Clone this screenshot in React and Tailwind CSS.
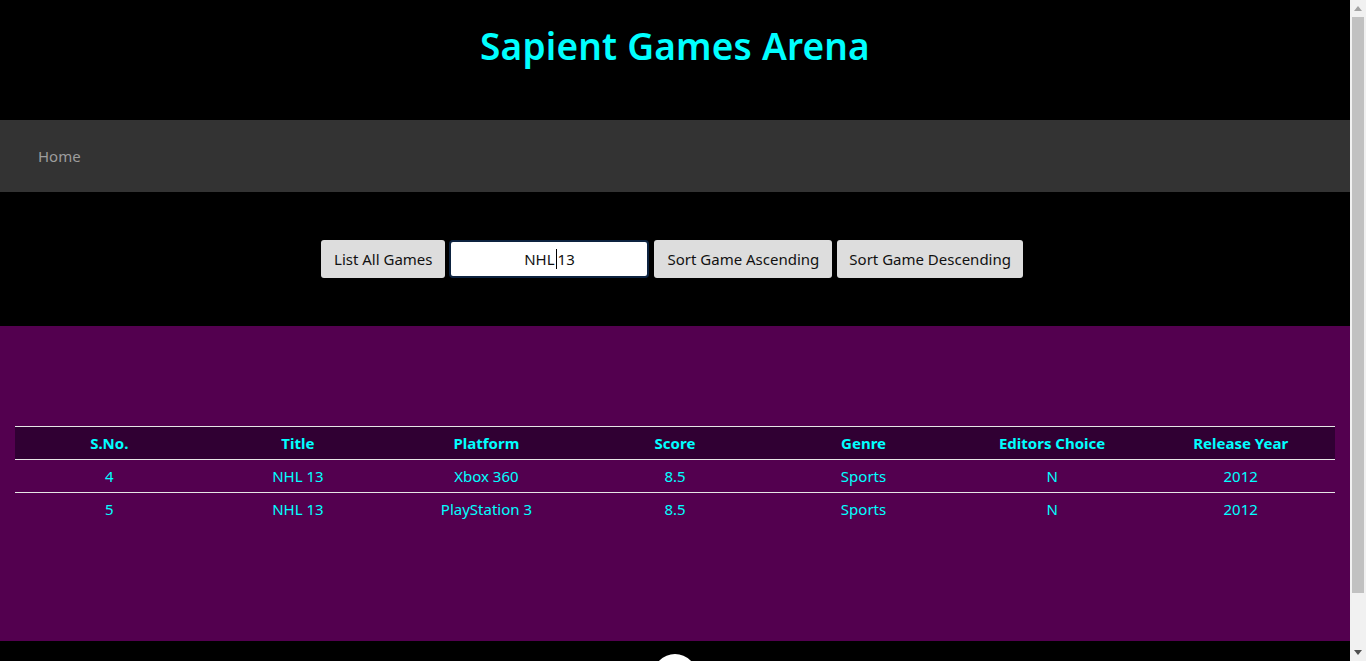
import React from 'react';

const games = [
  { sno: 4, title: 'NHL 13', platform: 'Xbox 360', score: '8.5', genre: 'Sports', editors: 'N', year: 2012 },
  { sno: 5, title: 'NHL 13', platform: 'PlayStation 3', score: '8.5', genre: 'Sports', editors: 'N', year: 2012 },
];

const cols = ['S.No.', 'Title', 'Platform', 'Score', 'Genre', 'Editors Choice', 'Release Year'];

function Scrollbar() {
  return (
    <div className="w-[16px] h-[661px] bg-[#f1f1f1] flex flex-col items-center shrink-0">
      <div className="h-[17px] flex items-center justify-center">
        <svg width="8" height="5" viewBox="0 0 8 5"><path d="M4 0L8 5H0z" fill="#a3a3a3" /></svg>
      </div>
      <div className="w-[12px] h-[576px] bg-[#c1c1c1]"></div>
      <div className="flex-1"></div>
      <div className="h-[17px] flex items-center justify-center">
        <svg width="8" height="5" viewBox="0 0 8 5"><path d="M0 0H8L4 5z" fill="#505050" /></svg>
      </div>
    </div>
  );
}

export default function App() {
  return (
    <div className="h-[661px] overflow-hidden flex bg-black font-['Noto_Sans','Open_Sans',sans-serif]">
      <div className="w-[1350px] shrink-0">
        <header className="h-[120px] flex justify-center pt-[22px]">
          <h1 className="text-[37px] leading-[48px] font-semibold text-[#00ffff] tracking-[0.2px]">Sapient Games Arena</h1>
        </header>

        <nav className="h-[72px] bg-[#333333] flex items-center px-[38px]">
          <a href="#" className="text-[15px] text-[#9d9d9d]">Home</a>
        </nav>

        <div className="h-[134px] flex justify-center items-start pt-[48px] gap-[4px] pr-[6px]">
          <button className="h-[38px] px-[13px] bg-[#dddddd] rounded-[3px] text-[15px] text-[#111]">List All Games</button>
          <div className="h-[38px] w-[200px] bg-white rounded-[4px] border-2 border-[#0d2340] flex items-center justify-center text-[15px] text-[#111]">
            NHL<span className="inline-block w-px h-[20px] bg-black mx-[1px]"></span>13
          </div>
          <button className="h-[38px] px-[13px] bg-[#dddddd] rounded-[3px] text-[15px] text-[#111] ml-[1px]">Sort Game Ascending</button>
          <button className="h-[38px] px-[12px] bg-[#dddddd] rounded-[3px] text-[15px] text-[#111] ml-[1px]">Sort Game Descending</button>
        </div>

        <main className="h-[315px] bg-[#53004f] pt-[100px] px-[15px]">
          <table className="w-full border-collapse table-fixed text-[15px] text-[#00ffff]">
            <thead>
              <tr className="bg-[#300033] border-t border-b border-[#e6e6e6] h-[33px]">
                {cols.map((c) => (
                  <th key={c} className="font-bold text-center">{c}</th>
                ))}
              </tr>
            </thead>
            <tbody>
              {games.map((g, i) => (
                <tr key={g.sno} className={i > 0 ? 'border-t border-[#e6e6e6] h-[33px]' : 'h-[33px]'}>
                  <td className="text-center">{g.sno}</td>
                  <td className="text-center">{g.title}</td>
                  <td className="text-center">{g.platform}</td>
                  <td className="text-center">{g.score}</td>
                  <td className="text-center">{g.genre}</td>
                  <td className="text-center">{g.editors}</td>
                  <td className="text-center">{g.year}</td>
                </tr>
              ))}
            </tbody>
          </table>
        </main>

        <footer className="h-[76px] flex justify-center pt-[13px]">
          <div className="w-[44px] h-[44px] rounded-full bg-white"></div>
        </footer>
      </div>
      <Scrollbar />
    </div>
  );
}
